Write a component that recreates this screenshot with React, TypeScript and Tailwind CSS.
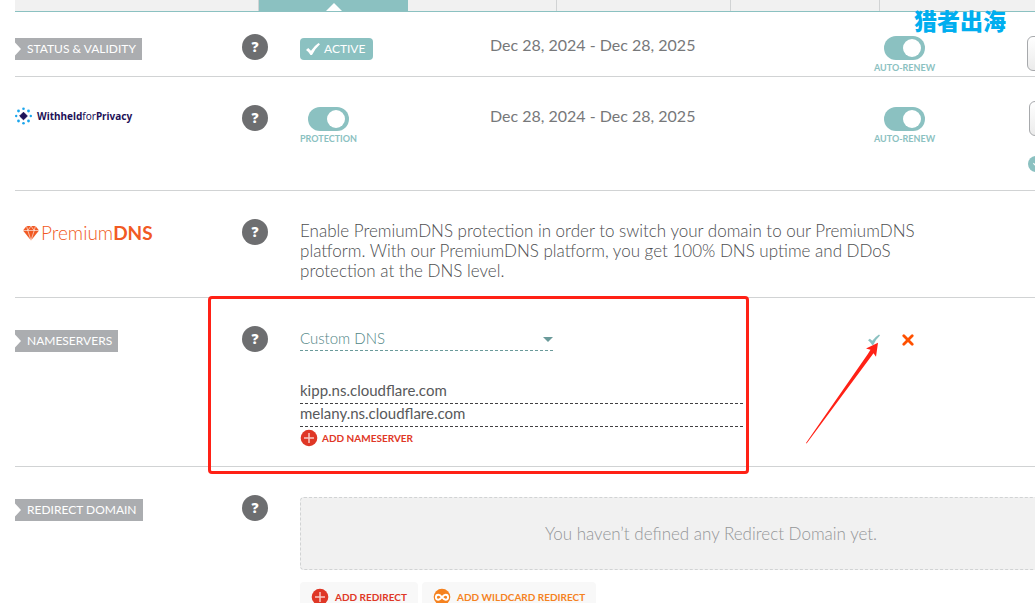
import React, { useState, type ReactNode } from "react";

function HelpButton({ topic }: { topic: string }) {
  return (
    <button
      type="button"
      aria-label={`Help: ${topic}`}
      className="flex size-[26px] items-center justify-center rounded-full bg-[#6d6e70] font-['Open_Sans',sans-serif] text-[14px] leading-none font-extrabold text-white"
    >
      ?
    </button>
  );
}

function Tag({ children }: { children: ReactNode }) {
  return (
    <span className="mt-1 inline-flex h-[22px] items-center bg-[#abadb0] pr-1.5 text-[12px] leading-none text-white">
      <svg width="6" height="14" viewBox="0 0 6 14" className="mr-1.5" aria-hidden="true">
        <path d="M0 0.5L6 7L0 13.5Z" fill="#fff" />
      </svg>
      {children}
    </span>
  );
}

function Toggle({ id, label }: { id: string; label: string }) {
  const [on, setOn] = useState(true);
  return (
    <div className="mt-0.5 flex w-fit flex-col items-center">
      <input
        id={id}
        type="checkbox"
        checked={on}
        onChange={() => setOn(!on)}
        className="flex h-6 w-[41px] appearance-none items-center rounded-full bg-[#b5b7b9] px-1 before:size-[18px] before:rounded-full before:bg-white checked:justify-end checked:bg-[#8bc1c1]"
      />
      <label htmlFor={id} className="mt-0.5 text-[9px] leading-3 font-bold text-[#8bc1c1]">
        {label}
      </label>
    </div>
  );
}

function PlusCircle() {
  return (
    <svg width="18" height="18" viewBox="0 0 18 18" aria-hidden="true">
      <circle cx="9" cy="9" r="8.3" fill="#df3726" />
      <path d="M9 4v10M4 9h10" stroke="#f8c9c3" strokeWidth="1.5" />
    </svg>
  );
}

function InfinityCircle() {
  return (
    <svg width="18" height="18" viewBox="0 0 18 18" aria-hidden="true">
      <circle cx="9" cy="9" r="8.3" fill="#f5821f" />
      <path
        d="M9 9.2C7.6 7.3 6.6 6.7 5.4 6.7a2.5 2.5 0 0 0 0 5c1.2 0 2.2-.7 3.6-2.5s2.4-2.5 3.6-2.5a2.5 2.5 0 0 1 0 5c-1.2 0-2.2-.7-3.6-2.5Z"
        fill="none"
        stroke="#fff"
        strokeWidth="1.9"
      />
    </svg>
  );
}

function PrivacyLogo() {
  return (
    <div className="mt-0.5 flex items-center gap-1 text-[10px] leading-[18px] font-bold text-[#1e1258]">
      <svg width="18" height="18" viewBox="0 0 18 18" aria-hidden="true">
        <path d="M8.5 5.2L12.3 9L8.5 12.8L4.7 9Z" fill="#1e1258" stroke="#1e1258" strokeLinejoin="round" />
        <g fill="#1ba5ec">
          <circle cx="8.5" cy="1.7" r="1.3" />
          <circle cx="13.5" cy="4" r="1.4" />
          <circle cx="15.8" cy="9" r="1.2" />
          <circle cx="13.5" cy="14" r="1.4" />
          <circle cx="8.5" cy="16.3" r="1.3" />
          <circle cx="3.5" cy="14" r="1.4" />
          <circle cx="1.2" cy="9" r="1.2" />
          <circle cx="3.5" cy="4" r="1.4" />
        </g>
      </svg>
      <span className="font-['Noto_Sans',sans-serif]">
        Withheld<span className="font-normal">for</span>Privacy
      </span>
    </div>
  );
}

function PremiumLogo() {
  return (
    <div className="mt-0.5 flex items-center gap-0.5 pl-2 text-[19px] leading-6 text-[#f15a24]">
      <svg width="16" height="16" viewBox="0 0 16 16" aria-hidden="true">
        <path d="M3.5 1h9L16 5.5L8 15.5L0 5.5Z" fill="#f15a24" />
        <path
          d="M0 5.5h16M3.5 1l1.3 4.5L8 15.5l3.2-10L12.5 1M4.8 5.5L8 1l3.2 4.5"
          fill="none"
          stroke="#fff"
          strokeWidth="0.6"
        />
      </svg>
      <span className="font-light">
        Premium<span className="font-bold">DNS</span>
      </span>
    </div>
  );
}

function Row({ label, topic, className = "pt-7", children }: {
  label: ReactNode;
  topic: string;
  className?: string;
  children: ReactNode;
}) {
  return (
    <section className={`grid grid-cols-[227px_58px_1fr] items-start border-b border-[#d1d3d4] ${className}`}>
      <div>{label}</div>
      <HelpButton topic={topic} />
      {children}
    </section>
  );
}

const columns = "grid grid-cols-[190px_384px_153px_1fr] items-start";
const nameserverInput =
  "block h-[23px] w-full border-b border-dashed border-[#414042] bg-transparent pb-1 text-[15px] text-[#58595b] outline-none";
const manageButton =
  "h-[35px] w-20 rounded-md border border-[#a7a9ac] bg-linear-to-b from-white to-[#ebebeb] text-[12px] text-[#6d6e70]";

export default function App() {
  const [servers, setServers] = useState(["kipp.ns.cloudflare.com", "melany.ns.cloudflare.com"]);

  return (
    <div className="relative h-screen overflow-hidden bg-white font-['Lato',sans-serif] text-[#4d4e50]">
      <main className="min-w-[1137px] px-[15px]">
        <nav
          aria-label="Domain sections"
          className="grid h-3 grid-cols-[244px_149px_149px_174px_149px_1fr] border-b border-[#8bc1c1] bg-[#f1f1f1]"
        >
          <a href="#products" aria-label="Products" className="border-r border-[#d1d3d4]" />
          <a href="#domain" aria-label="Domain" aria-current="page" className="flex items-end justify-center bg-[#8bc1c1]">
            <svg width="16" height="8" viewBox="0 0 16 8" aria-hidden="true">
              <path d="M0 8L8 0L16 8Z" fill="#fff" />
            </svg>
          </a>
          <a href="#sharing" aria-label="Sharing" className="border-r border-[#d1d3d4]" />
          <a href="#dns" aria-label="DNS" className="border-r border-[#d1d3d4]" />
          <a href="#transfer" aria-label="Transfer" className="border-r border-[#d1d3d4]" />
        </nav>

        <Row label={<Tag>STATUS &amp; VALIDITY</Tag>} topic="status" className="h-[65px] pt-[22px]">
          <div className={columns}>
            <span className="mt-1 flex h-[22px] w-fit items-center gap-1 rounded bg-[#8bc1c1] pr-2 pl-1.5 text-[12px] leading-none text-white">
              <svg width="14" height="12" viewBox="0 0 14 12" aria-hidden="true">
                <path d="M0 7L2.2 5L5 7.8Q8 3 12.5 0L14 1.2Q9 5.5 6 12H4.5Q3 9 0 7Z" fill="#fff" />
              </svg>
              ACTIVE
            </span>
            <p className="mt-px text-[16px] leading-5 text-[#77787a]">Dec 28, 2024 - Dec 28, 2025</p>
            <Toggle id="domain-renew" label="AUTO-RENEW" />
            <button type="button" aria-label="Add years" className={`mt-0.5 ${manageButton}`} />
          </div>
        </Row>

        <Row label={<PrivacyLogo />} topic="privacy" className="h-[114px] pt-7">
          <div className={columns}>
            <Toggle id="privacy" label="PROTECTION" />
            <p className="mt-px text-[16px] leading-5 text-[#77787a]">Dec 28, 2024 - Dec 28, 2025</p>
            <Toggle id="privacy-renew" label="AUTO-RENEW" />
            <div className="-mt-1 flex flex-col gap-5 pl-px">
              <button type="button" aria-label="Manage privacy" className={`ml-px ${manageButton}`} />
              <button type="button" aria-label="More" className="flex size-4 items-center justify-center rounded-full bg-[#8bc1c1]">
                <svg width="6" height="6" viewBox="0 0 8 8" aria-hidden="true">
                  <path d="M0.5 3L4 6.5L7.5 3" fill="none" stroke="#fff" strokeWidth="1.5" />
                </svg>
              </button>
            </div>
          </div>
        </Row>

        <Row label={<PremiumLogo />} topic="PremiumDNS" className="h-[107px] pt-7">
          <p className="mt-0.5 max-w-[640px] text-[17px] leading-5 font-light">
            Enable PremiumDNS protection in order to switch your domain to our PremiumDNS
            <br />
            platform. With our PremiumDNS platform, you get 100% DNS uptime and DDoS
            <br />
            protection at the DNS level.
          </p>
        </Row>

        <Row label={<Tag>NAMESERVERS</Tag>} topic="nameservers" className="h-[169px] pt-7">
          <div className="grid grid-cols-[568px_1fr] items-start">
            <div className="w-[443px]">
              <div className="relative w-[253px]">
                <select
                  aria-label="Nameserver type"
                  defaultValue="custom"
                  className="block h-[25px] w-full appearance-none border-b border-dashed border-[#6a9a9a] bg-transparent text-[15px] font-light text-[#4f8585] outline-none"
                >
                  <option value="custom">Custom DNS</option>
                  <option value="basic">Namecheap BasicDNS</option>
                </select>
                <svg width="10" height="5" viewBox="0 0 10 5" className="pointer-events-none absolute top-[11px] right-0" aria-hidden="true">
                  <path d="M0 0H10L5 5Z" fill="#6a9a9a" />
                </svg>
              </div>
              <div className="mt-[30px]">
                {servers.map((server, i) => (
                  <input
                    key={i}
                    aria-label={`Nameserver ${i + 1}`}
                    value={server}
                    onChange={(e) => setServers(servers.map((s, j) => (j === i ? e.target.value : s)))}
                    className={nameserverInput}
                  />
                ))}
              </div>
              <button
                type="button"
                onClick={() => setServers([...servers, ""])}
                className="mt-px flex h-5 items-center gap-1 text-[10px] font-bold text-[#df3726]"
              >
                <PlusCircle />
                ADD NAMESERVER
              </button>
            </div>
            <div className="mt-2 flex items-center gap-[22px]">
              <button type="button" aria-label="Save nameservers">
                <svg width="12" height="12" viewBox="0 0 12 12" className="block" aria-hidden="true">
                  <path d="M0 6.2L1.8 4.7L4.3 6.8Q7 3 11 0.5L12 1.5Q8 5 5.3 11H4.2Q2.5 8 0 6.2Z" fill="#8bc1c1" />
                </svg>
              </button>
              <button type="button" aria-label="Cancel">
                <svg width="12" height="12" viewBox="0 0 12 12" className="block" aria-hidden="true">
                  <path d="M1.8 1.8L10.2 10.2M10.2 1.8L1.8 10.2" stroke="#ff5000" strokeWidth="2.8" strokeLinecap="round" />
                </svg>
              </button>
            </div>
          </div>
        </Row>

        <Row label={<Tag>REDIRECT DOMAIN</Tag>} topic="redirects" className="pt-7 pb-7">
          <div className="mt-0.5">
            <p className="flex h-[73px] items-center justify-center rounded border border-dashed border-[#d1d3d4] bg-[#f1f1f1] text-[17px] leading-5 font-light text-[#949698]">
              You haven’t defined any Redirect Domain yet.
            </p>
            <div className="mt-3 flex gap-1 text-[10px] font-bold">
              <button type="button" className="flex h-[30px] items-center gap-1.5 rounded bg-[#f8f8f8] px-[11px] text-[#df3726]">
                <PlusCircle />
                ADD REDIRECT
              </button>
              <button type="button" className="flex h-[30px] items-center gap-1.5 rounded bg-[#f8f8f8] px-[11px] text-[#f5821f]">
                <InfinityCircle />
                ADD WILDCARD REDIRECT
              </button>
            </div>
          </div>
        </Row>
      </main>

      <p lang="zh" className="absolute top-2 left-[914px] font-['Noto_Sans_CJK_SC',sans-serif] text-[23px] leading-6 font-black text-[#00aeef]">
        猎者出海
      </p>
      <div className="pointer-events-none absolute top-[296px] left-[208px] h-[178px] w-[541px] rounded border-3 border-[#ff2116]" />
      <svg width="76" height="102" viewBox="0 0 76 102" className="pointer-events-none absolute top-[342px] left-[805px]" aria-hidden="true">
        <path d="M1 101L62.5 12.5L65.5 7.8L61 6.6L73 0.7L71 14.8L68.5 11.3L65 16L1.6 101.4Z" fill="#ff2116" />
      </svg>
    </div>
  );
}
